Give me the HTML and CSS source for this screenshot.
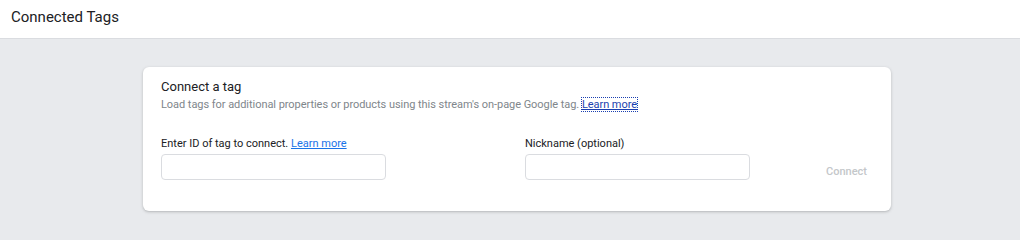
FILE: index.html
```html
<!DOCTYPE html>
<html lang="en">
<head>
    <meta charset="UTF-8">
    <meta name="viewport" content="width=device-width, initial-scale=1.0">
    <title>Connected Tags</title>
    <link rel="stylesheet" href="styles.css">
</head>
<body>
    <header class="top-bar">
        <h1>Connected Tags</h1>
    </header>

    <main class="page">
        <section class="card">
            <h2>Connect a tag</h2>
            <p class="subtitle">Load tags for additional properties or products using this stream's on-page Google tag. <a href="#" class="focused">Learn more</a></p>

            <div class="form-row">
                <div class="field">
                    <label for="tag-id">Enter ID of tag to connect. <a href="#">Learn more</a></label>
                    <input type="text" id="tag-id">
                </div>
                <div class="field">
                    <label for="nickname">Nickname (optional)</label>
                    <input type="text" id="nickname">
                </div>
                <button class="connect" disabled>Connect</button>
            </div>
        </section>
    </main>
</body>
</html>
```

FILE: styles.css
```css
body {
    margin: 0;
    font-family: 'Roboto', 'Liberation Sans', sans-serif;
    background: #e8eaed;
    color: #202124;
    height: 240px;
    overflow: hidden;
}

.top-bar {
    background: #fff;
    height: 38px;
    border-bottom: 1px solid #dadce0;
    display: flex;
    align-items: center;
    padding-left: 11px;
}

.top-bar h1 {
    margin: 0;
    font-size: 15px;
    font-weight: 400;
    color: #202124;
    margin-top: -5px;
}

.page {
    padding: 28px 0 0 143px;
}

.card {
    width: 712px;
    background: #fff;
    border-radius: 6px;
    box-shadow: 0 1px 2px rgba(60, 64, 67, 0.2), 0 1px 3px 1px rgba(60, 64, 67, 0.08);
    padding: 12px 18px 31px;
}

.card h2 {
    margin: 0;
    font-size: 13px;
    font-weight: 400;
    line-height: 16px;
}

.subtitle {
    margin: 2px 0 0;
    font-size: 11px;
    line-height: 16px;
    color: #80868b;
    letter-spacing: -0.05px;
}

a {
    color: #1a73e8;
    text-decoration: underline;
}

.focused {
    outline: 1px dotted #1a3fb0;
    color: #1a3fb0;
}

.form-row {
    display: grid;
    grid-template-columns: 364px 1fr auto;
    align-items: end;
    margin-top: 24px;
}

.field label {
    display: block;
    font-size: 11px;
    line-height: 14px;
    margin-bottom: 3px;
}

.field input {
    display: block;
    width: 225px;
    height: 26px;
    box-sizing: border-box;
    border: 1px solid #dadce0;
    border-radius: 4px;
    outline: none;
}

.connect {
    background: none;
    border: none;
    font-family: inherit;
    font-size: 11px;
    font-weight: 500;
    color: #c4c7ca;
    padding: 0 6px 0 8px;
    margin-bottom: 2px;
}
```
